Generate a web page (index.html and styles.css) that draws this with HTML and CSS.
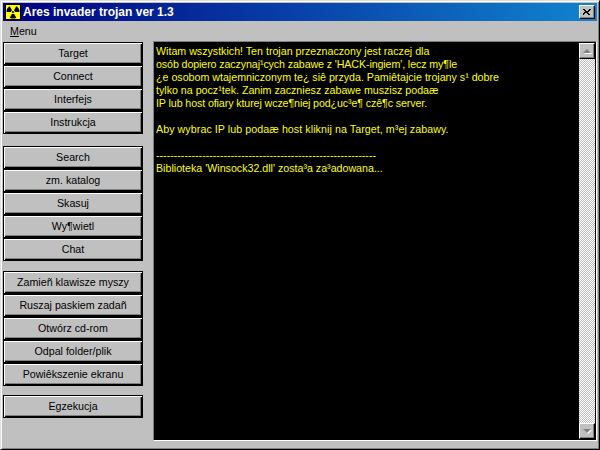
FILE: index.html
```html
<!DOCTYPE html>
<html lang="en">
<head>
    <meta charset="UTF-8">
    <meta name="viewport" content="width=device-width, initial-scale=1.0">
    <title>Ares invader trojan ver 1.3</title>
    <link rel="stylesheet" href="styles.css">
</head>
<body>
    <div class="window">
        <div class="titlebar">
            <svg class="app-icon" width="16" height="16" viewBox="0 0 16 16">
                <rect width="16" height="16" fill="#000"/>
                <rect x="1" y="1" width="14" height="14" fill="#ffff00"/>
                <path d="M7 6.27 L4.75 2.37 A6.5 6.5 0 0 0 1.5 8 L6 8 A2 2 0 0 1 7 6.27Z" fill="#000"/>
                <path d="M9 6.27 L11.25 2.37 A6.5 6.5 0 0 1 14.5 8 L10 8 A2 2 0 0 0 9 6.27Z" fill="#000"/>
                <path d="M7 9.73 L4.75 13.63 A6.5 6.5 0 0 0 11.25 13.63 L9 9.73 A2 2 0 0 1 7 9.73Z" fill="#000"/>
                <circle cx="8" cy="8" r="1.1" fill="#000"/>
            </svg>
            <span class="title-text">Ares invader trojan ver 1.3</span>
            <div class="close-btn">
                <svg width="8" height="7" viewBox="0 0 8 7">
                    <path d="M0 0h2v1h1v1h2v-1h1v-1h2v1h-1v1h-1v1h-1v1h1v1h1v1h-2v-1h-1v-1h-2v1h-1v1h-2v-1h1v-1h1v-1h1v-1h-1v-1h-1z" fill="#000"/>
                </svg>
            </div>
        </div>
        <div class="menubar"><span class="menu-item"><u>M</u>enu</span></div>
        <div class="content">
            <div class="sidebar">
                <div class="btn-group">
                    <button>Target</button>
                    <button>Connect</button>
                    <button>Interfejs</button>
                    <button>Instrukcja</button>
                </div>
                <div class="btn-group files">
                    <button>Search</button>
                    <button>zm. katalog</button>
                    <button>Skasuj</button>
                    <button>Wy¶wietl</button>
                    <button>Chat</button>
                </div>
                <div class="btn-group tricks">
                    <button>Zamieñ klawisze myszy</button>
                    <button>Ruszaj paskiem zadañ</button>
                    <button>Otwórz cd-rom</button>
                    <button>Odpal folder/plik</button>
                    <button>Powiêkszenie ekranu</button>
                </div>
                <div class="btn-group run">
                    <button>Egzekucja</button>
                </div>
            </div>
            <div class="memo">
                <div class="memo-text">
                    <p>Witam wszystkich! Ten trojan przeznaczony jest raczej dla</p>
                    <p class="tight">osób dopiero zaczynaj¹cych zabawe z 'HACK-ingiem', lecz my¶le</p>
                    <p>¿e osobom wtajemniczonym te¿ siê przyda. Pamiêtajcie trojany s¹ dobre</p>
                    <p>tylko na pocz¹tek. Zanim zaczniesz zabawe muszisz podaæ</p>
                    <p class="tight">IP lub host ofiary kturej wcze¶niej pod¿uc³e¶ czê¶c server.</p>
                    <p>&nbsp;</p>
                    <p class="loose">Aby wybrac IP lub podaæ host kliknij na Target, m³ej zabawy.</p>
                    <p>&nbsp;</p>
                    <p>--------------------------------------------------------------</p>
                    <p>Biblioteka 'Winsock32.dll' zosta³a za³adowana...</p>
                </div>
                <div class="scrollbar">
                    <div class="scroll-btn"><span class="arrow-up"></span></div>
                    <div class="scroll-track"></div>
                    <div class="scroll-btn"><span class="arrow-down"></span></div>
                </div>
            </div>
        </div>
    </div>
</body>
</html>
```

FILE: styles.css
```css
html, body {
    margin: 0;
    padding: 0;
}
body {
    width: 600px;
    height: 450px;
    overflow: hidden;
    background-color: #c0c0c0;
    font-family: "Liberation Sans", Arial, sans-serif;
    font-size: 10.67px;
}
.window {
    box-sizing: border-box;
    width: 600px;
    height: 450px;
    padding: 2px 2px 2px 2px;
    display: flex;
    flex-direction: column;
    background-color: #c0c0c0;
    border-top: 1px solid #dfdfdf;
    border-left: 1px solid #dfdfdf;
    border-right: 1px solid #000;
    border-bottom: 1px solid #000;
    box-shadow: inset 1px 1px 0 #fff, inset -1px -1px 0 #808080;
}
.titlebar {
    height: 18px;
    flex: none;
    display: flex;
    align-items: center;
    padding: 0 2px;
    background: linear-gradient(to right, #000080, #1084d0);
}
.app-icon {
    flex: none;
}
.title-text {
    margin-left: 2px;
    color: white;
    font-size: 12px;
    font-weight: bold;
}
.close-btn {
    box-sizing: border-box;
    width: 16px;
    height: 14px;
    margin-left: auto;
    display: flex;
    align-items: center;
    justify-content: center;
    background-color: #c0c0c0;
    border-top: 1px solid #fff;
    border-left: 1px solid #fff;
    border-right: 1px solid #000;
    border-bottom: 1px solid #000;
    box-shadow: inset -1px -1px 0 #808080;
}
.menubar {
    height: 20px;
    flex: none;
    display: flex;
    align-items: center;
    padding-left: 7px;
}
.menu-item {
    color: black;
}
.content {
    flex: 1;
    display: flex;
    min-height: 0;
}
.sidebar {
    width: 140px;
    flex: none;
    padding-top: 1px;
    display: flex;
    flex-direction: column;
}
.btn-group {
    display: flex;
    flex-direction: column;
}
.files {
    margin-top: 12px;
}
.tricks {
    margin-top: 10px;
}
.run {
    margin-top: 9px;
}
button {
    box-sizing: border-box;
    width: 140px;
    height: 23px;
    padding: 0 0 1px;
    background-color: #c0c0c0;
    color: black;
    font-family: "Liberation Sans", Arial, sans-serif;
    font-size: 10.67px;
    border: 1px solid #000;
    box-shadow: inset 1px 1px 0 #fff, inset -1px -1px 0 #000, inset -2px -2px 0 #808080;
}
.memo {
    box-sizing: border-box;
    width: 444px;
    height: 400px;
    margin-left: 10px;
    display: flex;
    background-color: #000;
    border-top: 1px solid #808080;
    border-left: 1px solid #808080;
    border-right: 1px solid #fff;
    border-bottom: 1px solid #fff;
}
.memo-text {
    flex: 1;
    padding: 3px 2px;
    color: #ffff00;
    line-height: 13px;
    white-space: nowrap;
    overflow: hidden;
}
.memo-text p {
    margin: 0;
}
.memo-text .tight {
    letter-spacing: -0.1px;
}
.memo-text .loose {
    letter-spacing: 0.07px;
}
.scrollbar {
    width: 16px;
    flex: none;
    margin: 1px;
    display: flex;
    flex-direction: column;
}
.scroll-track {
    flex: 1;
    background-color: #fff;
    background-image: repeating-conic-gradient(#c0c0c0 0 25%, #fff 0 50%);
    background-size: 2px 2px;
}
.scroll-btn {
    box-sizing: border-box;
    height: 16px;
    flex: none;
    display: flex;
    align-items: center;
    justify-content: center;
    background-color: #c0c0c0;
    border-top: 1px solid #fff;
    border-left: 1px solid #fff;
    border-right: 1px solid #000;
    border-bottom: 1px solid #000;
    box-shadow: inset -1px -1px 0 #808080;
}
.arrow-up {
    width: 0;
    height: 0;
    border-left: 4px solid transparent;
    border-right: 4px solid transparent;
    border-bottom: 4px solid #808080;
    filter: drop-shadow(1px 1px 0 #fff);
}
.arrow-down {
    width: 0;
    height: 0;
    border-left: 4px solid transparent;
    border-right: 4px solid transparent;
    border-top: 4px solid #808080;
    filter: drop-shadow(1px 1px 0 #fff);
}
```
